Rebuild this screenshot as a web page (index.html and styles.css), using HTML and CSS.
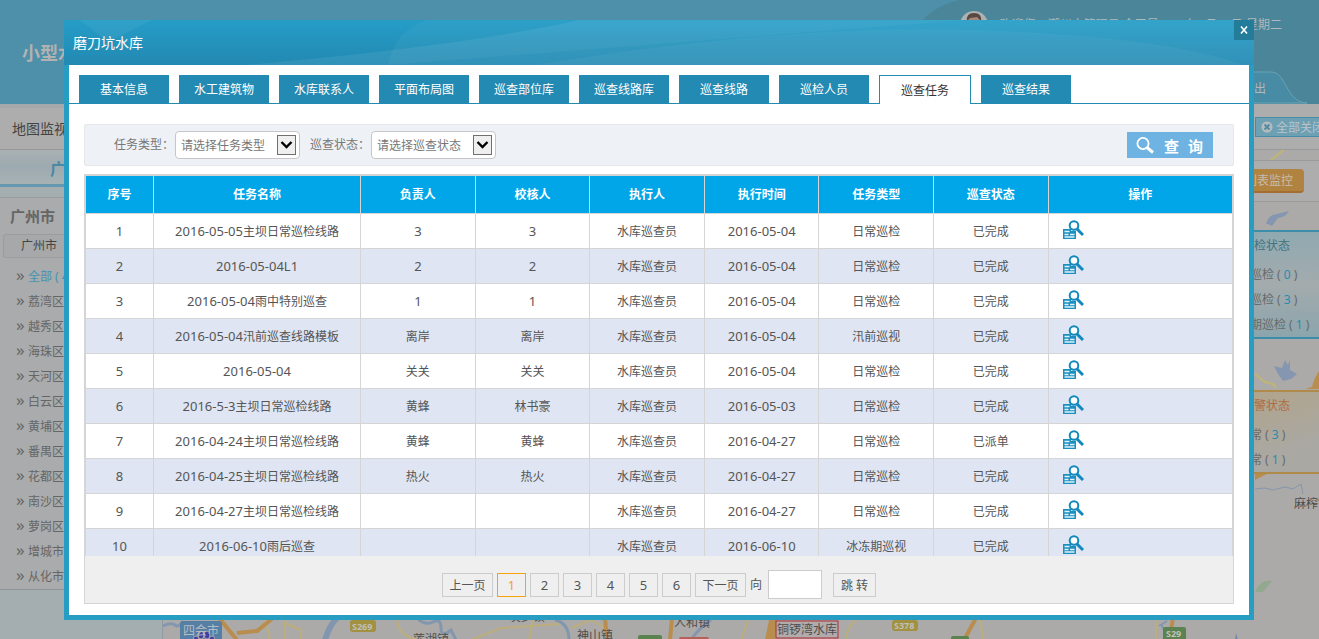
FILE: index.html
```
<!DOCTYPE html>
<html lang="zh-CN">
<head>
    <meta charset="utf-8">
    <meta name="viewport" content="width=device-width, initial-scale=1">
    <title>磨刀坑水库</title>
    <link rel="stylesheet" href="styles.css">
</head>
<body>

<!-- icons -->
<svg class="defs" width="0" height="0">
    <symbol id="icon-view" viewBox="0 0 21 19">
        <path d="M0 9h8v2h5v8H0z" fill="#1a8fc0"/>
        <path d="M1.500 11.500h5M1.500 14.500h4M7 14.500h4.500M1.500 17h10" stroke="#e2f2f9" stroke-width="1.300"/>
        <circle cx="11" cy="5.500" r="4.300" fill="#fff" stroke="#1089bd" stroke-width="2"/>
        <path d="M14 9l6 6" stroke="#1089bd" stroke-width="3"/>
    </symbol>
    <symbol id="icon-arrow" viewBox="0 0 19 20">
        <rect x="0.500" y="0.500" width="18" height="19" fill="#efefef" stroke="#707070"/>
        <path d="M4.500 7l5 5 5-5" fill="none" stroke="#000" stroke-width="2.400"/>
    </symbol>
</svg>

<div class="page">
    <header class="top">
        <svg class="top-curve" width="420" height="104" viewBox="0 0 420 104">
            <path d="M24 20Q36 6 60 0H420V104H20V20z" fill="#4b8599"/>
            <path d="M330 72h42c16 0 14 30 36 31H330z" fill="#488ba4" stroke="#6ba3b6"/>
        </svg>
        <h1>小型水</h1>
        <svg class="avatar" width="28" height="28" viewBox="0 0 28 28">
            <circle cx="14" cy="14" r="14" fill="#adb1b2"/>
            <circle cx="14" cy="12" r="7" fill="#a8877a"/>
            <path d="M7 10Q6 2 14 2T21 10L17 6 10 7z" fill="#574942"/>
        </svg>
        <span class="welcome">欢迎您：潮州市管理员 今天是2016年5月10日 星期二</span>
        <a class="logout" href="#">退出</a>
    </header>

    <div class="main">
        <aside class="side">
            <div class="side-map">地图监视</div>
            <div class="side-tab">广州市</div>
            <div class="side-box">
                <h2>广州市</h2>
                <div class="side-cur">广州市</div>
                <ul>
                    <li class="on"><a href="#">全部 ( 4 )</a></li>
                    <li><a href="#">荔湾区</a></li>
                    <li><a href="#">越秀区</a></li>
                    <li><a href="#">海珠区</a></li>
                    <li><a href="#">天河区</a></li>
                    <li><a href="#">白云区</a></li>
                    <li><a href="#">黄埔区</a></li>
                    <li><a href="#">番禺区</a></li>
                    <li><a href="#">花都区</a></li>
                    <li><a href="#">南沙区</a></li>
                    <li><a href="#">萝岗区</a></li>
                    <li><a href="#">增城市</a></li>
                    <li><a href="#">从化市</a></li>
                </ul>
            </div>
        </aside>

        <div class="content">
            <svg class="map" width="100%" height="100%">
                <g transform="translate(-162 -104)" fill="none">
                    <!-- rivers -->
                    <g stroke="#8296b0" stroke-width="3">
                        <path d="M162 626q8-4 12-1t8-4"/>
                        <path d="M336 618q-8 8-12 22" stroke-width="6"/>
                        <path d="M416 618q8 8 16 4t8 6 10 2l6 12"/>
                        <path d="M554 620q14 3 14 20M710 620q-14 10-20 20"/>
                        <path d="M1254 489l10-1 8 2 12-3 8 2 8-5 2 10" stroke-width="1"/>
                        <path d="M1158 626l8-5M1160 624l4 8" stroke-width="2"/>
                    </g>
                    <!-- roads -->
                    <g stroke="#bcae7c" stroke-width="2">
                        <path d="M264 618l5 22M284 618v22M284 623l16 7v10M396 618q0 18 22 22M470 640l30-12 58-4M532 618l-4 22M570 628l20-8 14 8M748 618l-8 22M858 618q-14 8-12 22M979 618l3 22M1155 618v22"/>
                        <path d="M1270 160l14-11M1254 374l10 8 8 2 3 4" stroke="#c0b672"/>
                    </g>
                    <g stroke="#b98d4d" stroke-width="4">
                        <path d="M218 618l18 22M236 633l20-2 16-13M604 618l2 22M671 618l-2 22M975 618l-12 22M1172 618l-2 12"/>
                    </g>
                    <path d="M1304 389l7-2q4-16 12-20v22z" fill="#b98d4d"/>
                    <path d="M1254 473h14l-14 7zM768 620l8 0-2 20h-10z" fill="#b98d4d"/>
                    <!-- lakes and green -->
                    <path d="M1265 224q3-10 11-10l12-3q-3 6-11 7l-6 8-4-2z" fill="#8496b0"/>
                    <path d="M1273 366l8 2 3-8 3 5 2-5v10l7 4-6 5-8 2-5-7z" fill="#8496b0"/>
                    <path d="M1254 592q6-14 17-11l-9 11z" fill="#93a98f"/>
                    <path d="M1235 633l2 7h-3z" fill="#7088aa"/>
                    <rect x="179" y="621" width="42" height="20" rx="3" fill="#557fa5"/>
                    <g fill="#443fa5" stroke="#aaa" stroke-width="1">
                        <ellipse cx="200" cy="635" rx="3" ry="4"/>
                        <ellipse cx="206" cy="635" rx="3" ry="4"/>
                        <ellipse cx="195" cy="640" rx="3" ry="4"/>
                        <ellipse cx="211" cy="640" rx="3" ry="4"/>
                    </g>
                    <rect x="349" y="620" width="26" height="12" rx="3" fill="#a19140"/>
                    <rect x="891" y="620" width="26" height="11" rx="3" fill="#a19140"/>
                    <rect x="1162" y="627" width="23" height="14" rx="2" fill="#5b8351"/>
                    <rect x="637" y="635" width="24" height="6" rx="2" fill="#5b8351"/>
                    <rect x="950" y="636" width="18" height="6" rx="2" fill="#5b8351"/>
                    <rect x="678" y="637" width="30" height="6" rx="2" fill="#b5605a"/>
                    <rect x="775" y="621" width="62" height="17" fill="#b1acab" stroke="#b02a31"/>
                    <g class="map-road">
                        <text x="351" y="630">S269</text>
                        <text x="893" y="629">S378</text>
                        <text x="1165" y="637">S29</text>
                    </g>
                    <g class="map-town">
                        <text x="182" y="635" class="light">四会市</text>
                        <text x="412" y="644">莲湖镇</text>
                        <text x="508" y="621">炭步镇</text>
                        <text x="576" y="640">神山镇</text>
                        <text x="673" y="627">人和镇</text>
                        <text x="776" y="634">铜锣湾水库</text>
                        <text x="1293" y="508">麻榨镇</text>
                    </g>
                </g>
            </svg>

            <div class="tools">
                <div class="bar">
                    <button class="close-all" type="button">
                        <svg width="12" height="12" viewBox="0 0 12 12"><circle cx="6" cy="6" r="5.500" fill="#b4bcc0"/><path d="M3.500 3.500l5 5M8.500 3.500l-5 5" stroke="#548ba1" stroke-width="2"/></svg>全部关闭
                    </button>
                </div>
                <div class="bar bar-second">
                    <button class="list-watch" type="button">列表监控</button>
                </div>
                <div class="panel blue">
                    <h3>巡检状态</h3>
                    <p>日常巡检 ( <b>0</b> )</p>
                    <p>特别巡检 ( <b>3</b> )</p>
                    <p>冰冻期巡检 ( <b>1</b> )</p>
                </div>
                <div class="panel orange">
                    <h3>预警状态</h3>
                    <p>正常 ( <b>3</b> )</p>
                    <p>异常 ( <b>1</b> )</p>
                </div>
            </div>
        </div>
    </div>
</div>

<div class="mask">
    <div class="dialog" role="dialog" aria-labelledby="dialog-title">
        <div class="dialog-head">
            <svg viewBox="0 0 1190 45" preserveAspectRatio="none">
                <path d="M180 45Q400 26 515 0H1190V45z" fill="#fff" opacity=".07"/>
                <path d="M324 45Q330 12 362 0H900L324 45z" fill="#fff" opacity=".04"/>
                <path d="M470 45Q720 4 910 10T1180 45z" fill="#fff" opacity=".04"/>
                <path d="M16 0L44 22 88 0z" fill="#fff" opacity=".05"/>
            </svg>
            <h2 id="dialog-title">磨刀坑水库</h2>
            <button class="close" type="button" aria-label="关闭">
                <svg width="8" height="8" viewBox="0 0 8 8"><path d="M1 0.500l6 7M7 0.500l-6 7" stroke="#fff" stroke-width="1.600"/></svg>
            </button>
        </div>

        <nav class="tabs">
            <a href="#">基本信息</a>
            <a href="#">水工建筑物</a>
            <a href="#">水库联系人</a>
            <a href="#">平面布局图</a>
            <a href="#">巡查部位库</a>
            <a href="#">巡查线路库</a>
            <a href="#">巡查线路</a>
            <a href="#">巡检人员</a>
            <a href="#" class="active">巡查任务</a>
            <a href="#">巡查结果</a>
        </nav>

        <div class="dialog-body">
            <form class="search">
                <label for="type">任务类型：</label>
                <span class="select">
                    <select id="type"><option>请选择任务类型</option></select>
                    <svg width="19" height="20"><use href="#icon-arrow"/></svg>
                </span>
                <label for="state">巡查状态：</label>
                <span class="select">
                    <select id="state"><option>请选择巡查状态</option></select>
                    <svg width="19" height="20"><use href="#icon-arrow"/></svg>
                </span>
                <button class="query" type="button">
                    <svg width="19" height="17" viewBox="0 0 19 17"><circle cx="7" cy="6.500" r="5.600" fill="none" stroke="#fff" stroke-width="1.800"/><path d="M11 10.500l6 5" stroke="#fff" stroke-width="3"/></svg>
                    <span>查</span><span>询</span>
                </button>
            </form>

            <div class="table-wrap">
                <table>
                    <colgroup>
                        <col class="c6"><col class="c18"><col class="c10"><col class="c10"><col class="c10">
                        <col class="c10"><col class="c10"><col class="c10"><col class="c16">
                    </colgroup>
                    <thead>
                    <tr>
                        <th>序号</th>
                        <th>任务名称</th>
                        <th>负责人</th>
                        <th>校核人</th>
                        <th>执行人</th>
                        <th>执行时间</th>
                        <th>任务类型</th>
                        <th>巡查状态</th>
                        <th>操作</th>
                    </tr>
                    </thead>
                    <tbody>
                    <tr><td><i>1</i></td><td><i>2016-05-05</i>主坝日常巡检线路</td><td><i>3</i></td><td><i>3</i></td><td>水库巡查员</td><td><i>2016-05-04</i></td><td>日常巡检</td><td>已完成</td><td><a href="#" aria-label="查看"><svg width="21" height="19"><use href="#icon-view"/></svg></a></td></tr>
                    <tr><td><i>2</i></td><td><i>2016-05-04L1</i></td><td><i>2</i></td><td><i>2</i></td><td>水库巡查员</td><td><i>2016-05-04</i></td><td>日常巡检</td><td>已完成</td><td><a href="#" aria-label="查看"><svg width="21" height="19"><use href="#icon-view"/></svg></a></td></tr>
                    <tr><td><i>3</i></td><td><i>2016-05-04</i>雨中特别巡查</td><td><i>1</i></td><td><i>1</i></td><td>水库巡查员</td><td><i>2016-05-04</i></td><td>日常巡检</td><td>已完成</td><td><a href="#" aria-label="查看"><svg width="21" height="19"><use href="#icon-view"/></svg></a></td></tr>
                    <tr><td><i>4</i></td><td><i>2016-05-04</i>汛前巡查线路模板</td><td>离岸</td><td>离岸</td><td>水库巡查员</td><td><i>2016-05-04</i></td><td>汛前巡视</td><td>已完成</td><td><a href="#" aria-label="查看"><svg width="21" height="19"><use href="#icon-view"/></svg></a></td></tr>
                    <tr><td><i>5</i></td><td><i>2016-05-04</i></td><td>关关</td><td>关关</td><td>水库巡查员</td><td><i>2016-05-04</i></td><td>日常巡检</td><td>已完成</td><td><a href="#" aria-label="查看"><svg width="21" height="19"><use href="#icon-view"/></svg></a></td></tr>
                    <tr><td><i>6</i></td><td><i>2016-5-3</i>主坝日常巡检线路</td><td>黄蜂</td><td>林书豪</td><td>水库巡查员</td><td><i>2016-05-03</i></td><td>日常巡检</td><td>已完成</td><td><a href="#" aria-label="查看"><svg width="21" height="19"><use href="#icon-view"/></svg></a></td></tr>
                    <tr><td><i>7</i></td><td><i>2016-04-24</i>主坝日常巡检线路</td><td>黄蜂</td><td>黄蜂</td><td>水库巡查员</td><td><i>2016-04-27</i></td><td>日常巡检</td><td>已派单</td><td><a href="#" aria-label="查看"><svg width="21" height="19"><use href="#icon-view"/></svg></a></td></tr>
                    <tr><td><i>8</i></td><td><i>2016-04-25</i>主坝日常巡检线路</td><td>热火</td><td>热火</td><td>水库巡查员</td><td><i>2016-04-27</i></td><td>日常巡检</td><td>已完成</td><td><a href="#" aria-label="查看"><svg width="21" height="19"><use href="#icon-view"/></svg></a></td></tr>
                    <tr><td><i>9</i></td><td><i>2016-04-27</i>主坝日常巡检线路</td><td></td><td></td><td>水库巡查员</td><td><i>2016-04-27</i></td><td>日常巡检</td><td>已完成</td><td><a href="#" aria-label="查看"><svg width="21" height="19"><use href="#icon-view"/></svg></a></td></tr>
                    <tr><td><i>10</i></td><td><i>2016-06-10</i>雨后巡查</td><td></td><td></td><td>水库巡查员</td><td><i>2016-06-10</i></td><td>冰冻期巡视</td><td>已完成</td><td><a href="#" aria-label="查看"><svg width="21" height="19"><use href="#icon-view"/></svg></a></td></tr>
                    </tbody>
                </table>
            </div>

            <div class="pager">
                <a href="#" class="step">上一页</a>
                <a href="#" class="current">1</a>
                <a href="#">2</a>
                <a href="#">3</a>
                <a href="#">4</a>
                <a href="#">5</a>
                <a href="#">6</a>
                <a href="#" class="step">下一页</a>
                <label for="page">向</label>
                <input id="page" type="text">
                <button type="button">跳 转</button>
            </div>
        </div>
    </div>
</div>

</body>
</html>
```
FILE: styles.css
```
* {
    box-sizing: border-box;
}

html, body {
    height: 100%;
    margin: 0;
    overflow: hidden;
}

body, button, input, select {
    font-family: "Noto Sans", "Noto Sans CJK SC", sans-serif;
    font-size: 12px;
}

body {
    background: #adadad;
    color: #555;
    line-height: 18px;
}

h1, h2, h3, p, ul {
    margin: 0;
    padding: 0;
}

a {
    color: inherit;
    text-decoration: none;
}

button, input, select {
    margin: 0;
    padding: 0;
    border-radius: 0;
}

svg {
    display: block;
    flex-shrink: 0;
}

.defs {
    position: absolute;
}

/* page behind the dialog */
.page {
    display: flex;
    flex-direction: column;
    height: 100%;
}

.top {
    position: relative;
    display: flex;
    height: 104px;
    padding: 11px 37px 0 22px;
    background: #4e8fa9;
    color: #b0b8bb;
}

.top-curve {
    position: absolute;
    top: 0;
    right: 0;
}

.top h1 {
    flex: 1;
    margin-top: 30px;
    color: #b2b2b2;
    font-size: 18px;
    line-height: 24px;
}

.avatar {
    position: relative;
    margin-right: 12px;
}

.welcome {
    position: relative;
    margin-top: 5px;
    white-space: pre;
}

.logout {
    position: absolute;
    top: 80px;
    right: 53px;
}

.main {
    flex: 1;
    display: flex;
    min-height: 0;
}

.side {
    width: 163px;
    border-right: 1px solid #8d9da3;
    background: #a4adaf;
}

.side-map {
    height: 46px;
    padding: 13px 12px;
    border-top: 4px solid #a5a9aa;
    border-bottom: 1px solid #979797;
    background: #adadad;
    color: #444;
    font-size: 14px;
    line-height: 16px;
}

.side-tab {
    height: 37px;
    padding-left: 50px;
    border-bottom: 3px solid #6697b0;
    background: linear-gradient(#a9b1b4, #9daaaf 50%, #a7b2b4);
    color: #4789a6;
    font-size: 16px;
    font-weight: bold;
    line-height: 38px;
}

.side-box {
    margin-top: 10px;
    border-top: 1px solid #9b9b9b;
    border-bottom: 1px solid #8f9494;
    background: #a9abac;
    color: #666;
}

.side-box h2 {
    padding: 8px 10px;
    font-size: 15px;
    line-height: 20px;
}

.side-cur {
    margin-left: 3px;
    padding-left: 17px;
    border: 1px solid #9b9c9e;
    border-radius: 3px;
    background: #a7a8aa;
    color: #444;
    line-height: 22px;
}

.side ul {
    padding: 6px 0 0 16px;
    list-style: none;
}

.side li {
    display: flex;
    gap: 4px;
    line-height: 25px;
}

.side li::before {
    content: "»";
    width: 8px;
    font-size: 17px;
    line-height: 22px;
}

.side .on a {
    color: #4591b2;
}

/* map and toolbars share one cell */
.content {
    flex: 1;
    display: grid;
    min-width: 0;
    background: #acaaa8;
}

.map, .tools {
    grid-area: 1 / 1;
}

.map-road {
    fill: #c0c0b8;
    font-size: 9px;
    font-weight: bold;
}

.map-town {
    fill: #4d4d4d;
    font-size: 12px;
}

.map-town .light {
    fill: #b5bcc4;
}

.tools {
    display: flex;
    flex-direction: column;
    position: relative;
}

.bar {
    display: flex;
    justify-content: flex-end;
    height: 46px;
    padding-top: 13px;
    border-bottom: 1px solid #9a9a9a;
    background: #adadad;
}

.bar-second {
    height: 42px;
    margin-top: 10px;
    padding: 8px 15px 0 0;
    border-top: 1px solid #9a9a9a;
}

.close-all {
    display: flex;
    align-items: center;
    gap: 3px;
    width: 64px;
    height: 20px;
    padding-left: 5px;
    overflow: hidden;
    border: 1px solid #4a8ba5;
    border-right: 0;
    background: #6ea0b4;
    color: #b9c4c9;
    white-space: nowrap;
}

.list-watch {
    width: 70px;
    height: 24px;
    border: 0;
    border-bottom: 2px solid #a56d32;
    border-radius: 4px;
    background: #b18340;
    color: #c4bcaf;
}

.panel {
    align-self: flex-end;
    width: 93px;
    border-top: 2px solid;
    border-bottom: 2px solid;
    color: #696969;
    line-height: 25px;
    white-space: nowrap;
}

.panel h3 {
    padding-left: 16px;
    font-size: 12px;
    font-weight: normal;
    line-height: 28px;
}

.panel b {
    color: #2a8aae;
    font-weight: normal;
}

.blue {
    height: 109px;
    margin-top: 28px;
    border-color: #3b8da9;
    background: linear-gradient(#8fa9b0, #a3abad 50%, #8ba5ac);
}

.blue h3 {
    color: #3f7384;
}

.orange {
    height: 84px;
    margin-top: 51px;
    border-color: #b08a4b;
    background: linear-gradient(160deg, #b1a488, #aaa8a2 70%);
}

.orange h3 {
    color: #b26b3e;
}

.orange p {
    padding-left: 12px;
}

.panel p {
    margin-top: 2px;
    line-height: 25px;
}

.panel p + p {
    margin-top: 0;
}

/* dialog */
.mask {
    position: fixed;
    inset: 0;
    padding: 20px 65px 19px 64px;
}

.dialog {
    display: flex;
    flex-direction: column;
    height: 100%;
    border: 5px solid #279dc4;
    border-top: 0;
    background: #fff;
}

.dialog-head {
    position: relative;
    display: flex;
    justify-content: space-between;
    height: 45px;
    margin: 0 -5px;
    padding-left: 9px;
    background: linear-gradient(#259dc7, #2289b2);
    color: #fff;
}

.dialog-head > svg {
    position: absolute;
    left: 0;
    top: 0;
    width: 100%;
    height: 45px;
}

.dialog-head h2 {
    position: relative;
    font-size: 14px;
    font-weight: normal;
    line-height: 46px;
}

.close {
    position: relative;
    display: flex;
    align-items: center;
    justify-content: center;
    width: 20px;
    height: 20px;
    border: 0;
    background: #247c9b;
}

.tabs {
    display: flex;
    gap: 10px;
    padding: 10px 10px 0;
    border-bottom: 1px solid #238ab3;
}

.tabs a {
    width: 90px;
    height: 28px;
    background: #238ab3;
    color: #fff;
    line-height: 29px;
    text-align: center;
}

.tabs .active {
    width: 92px;
    height: 29px;
    margin-bottom: -1px;
    border: 1px solid #238ab3;
    border-bottom: 0;
    background: #fff;
    color: #333;
}

.dialog-body {
    flex: 1;
    display: flex;
    flex-direction: column;
    min-height: 0;
    padding: 20px 15px 11px;
}

.search {
    display: flex;
    align-items: center;
    height: 42px;
    padding: 0 20px 0 29px;
    border: 1px solid #e6e7e9;
    border-radius: 2px;
    background: #eef1f6;
    color: #777;
}

.search label {
    width: 61px;
}

.select {
    position: relative;
    width: 125px;
    margin-right: 10px;
}

.select select {
    appearance: none;
    display: block;
    width: 100%;
    height: 28px;
    padding-left: 5px;
    border: 1px solid #c6c6c6;
    border-radius: 4px;
    background: #fff;
    color: #777;
}

.select svg {
    position: absolute;
    top: 4px;
    right: 4px;
    pointer-events: none;
}

.query {
    display: flex;
    align-items: center;
    gap: 9px;
    width: 86px;
    height: 26px;
    margin-left: auto;
    padding-left: 9px;
    border: 0;
    background: #6eb3e1;
    color: #fff;
    font-size: 15px;
    font-weight: bold;
}

.table-wrap {
    flex: 1;
    min-height: 0;
    margin-top: 8px;
    overflow: hidden;
}

table {
    width: 100%;
    table-layout: fixed;
    border: 2px solid #d5d5d5;
    border-spacing: 0;
}

.c6 {
    width: 68px;
}

.c10 {
    width: 10%;
}

.c16 {
    width: 16%;
}

th, td {
    height: 35px;
    padding: 0;
    border-right: 1px solid #d5d5d5;
    border-bottom: 1px solid #d5d5d5;
    text-align: center;
}

th {
    height: 38px;
    background: #00a6e7;
    color: #fff;
}

th:last-child, td:last-child {
    border-right: 0;
}

td:last-child {
    padding: 0 0 3px 14px;
}

td a {
    display: block;
    width: 21px;
}

td i {
    font-size: 13px;
    font-style: normal;
}

/* keeps cells with and without digits on one baseline */
td:not(:last-child)::before {
    content: "\200b";
    font-size: 13px;
}

tbody tr:nth-child(even) {
    background: #dfe5f2;
}

.pager {
    display: flex;
    align-items: center;
    justify-content: center;
    gap: 4px;
    height: 48px;
    padding-top: 10px;
    border: 1px solid #d5d5d5;
    border-top: 0;
    background: #efefef;
}

.pager a, .pager button {
    width: 29px;
    height: 24px;
    border: 1px solid #ccc;
    background: #efefef;
    color: #555;
    font-size: 13px;
    line-height: 23px;
    text-align: center;
}

.pager .step {
    width: 51px;
    font-size: 12px;
}

.pager .current {
    border-color: #f9a10f;
    color: #f9a10f;
}

.pager input {
    width: 54px;
    height: 29px;
    margin: 0 7px 0 2px;
    border: 1px solid #ccc;
    background: #fff;
    text-align: center;
}

.pager button {
    width: 43px;
    font-size: 12px;
}
```
